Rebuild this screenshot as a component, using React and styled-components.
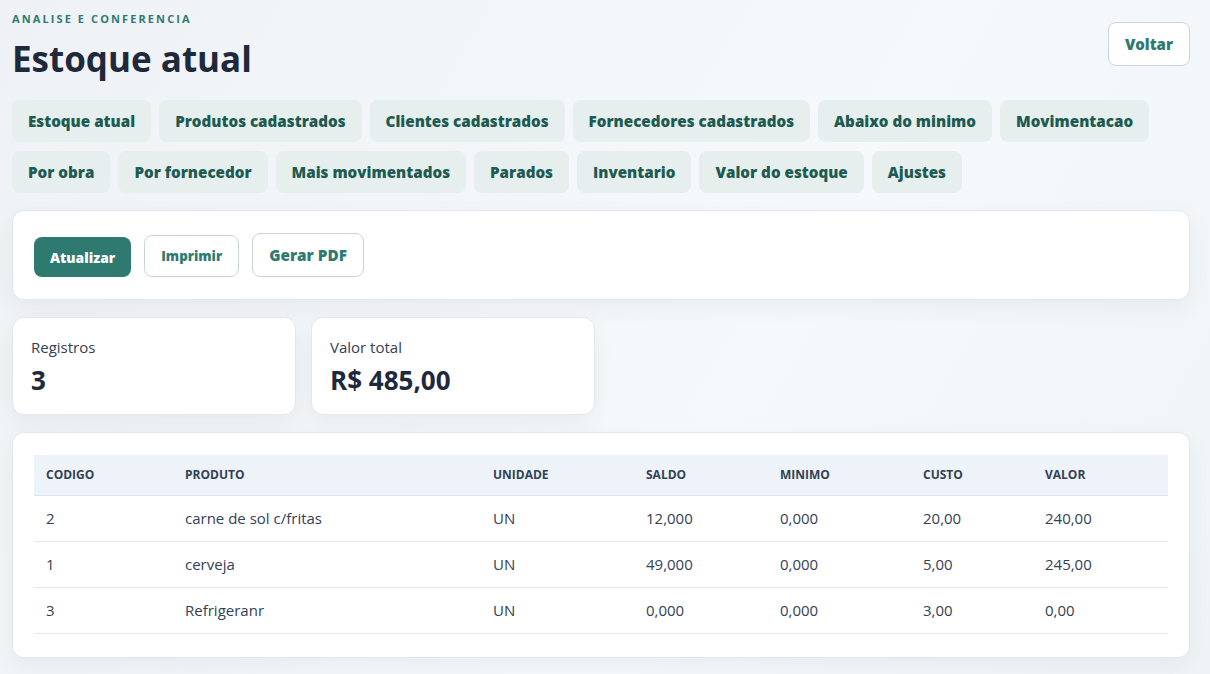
import styled, { createGlobalStyle } from "styled-components";

const GlobalStyle = createGlobalStyle`
  * { box-sizing: border-box; }
  body {
    margin: 0;
    font-family: "Open Sans", "Noto Sans", sans-serif;
    background: linear-gradient(120deg, #eef2f6 0%, #f6f9fb 60%, #eef4f6 100%);
    color: #1f2937;
    min-height: 100vh;
  }
`;

const tabs = [
  ["Estoque atual", "Produtos cadastrados", "Clientes cadastrados", "Fornecedores cadastrados", "Abaixo do minimo", "Movimentacao"],
  ["Por obra", "Por fornecedor", "Mais movimentados", "Parados", "Inventario", "Valor do estoque", "Ajustes"],
];

const columns = [
  { key: "codigo", label: "CODIGO", width: 139 },
  { key: "produto", label: "PRODUTO", width: 308 },
  { key: "unidade", label: "UNIDADE", width: 153 },
  { key: "saldo", label: "SALDO", width: 134 },
  { key: "minimo", label: "MINIMO", width: 143 },
  { key: "custo", label: "CUSTO", width: 122 },
  { key: "valor", label: "VALOR", width: 135 },
];

const rows = [
  { codigo: "2", produto: "carne de sol c/fritas", unidade: "UN", saldo: "12,000", minimo: "0,000", custo: "20,00", valor: "240,00" },
  { codigo: "1", produto: "cerveja", unidade: "UN", saldo: "49,000", minimo: "0,000", custo: "5,00", valor: "245,00" },
  { codigo: "3", produto: "Refrigeranr", unidade: "UN", saldo: "0,000", minimo: "0,000", custo: "3,00", valor: "0,00" },
];

export default function App() {
  return (
    <>
      <GlobalStyle />
      <Page>
        <Header>
          <div>
            <Eyebrow>ANALISE E CONFERENCIA</Eyebrow>
            <Title>Estoque atual</Title>
          </div>
          <OutlineButton $size={15} $h={44}>Voltar</OutlineButton>
        </Header>

        <Tabs>
          {tabs.map((line, i) => (
            <TabRow key={i}>
              {line.map((t) => (
                <Tab key={t}>{t}</Tab>
              ))}
            </TabRow>
          ))}
        </Tabs>

        <Card>
          <Toolbar>
            <PrimaryButton>Atualizar</PrimaryButton>
            <OutlineButton $size={13.3} $h={42}>Imprimir</OutlineButton>
            <OutlineButton $size={15.3} $h={44}>Gerar PDF</OutlineButton>
          </Toolbar>
        </Card>

        <Stats>
          <StatCard>
            <StatLabel>Registros</StatLabel>
            <StatValue>3</StatValue>
          </StatCard>
          <StatCard>
            <StatLabel>Valor total</StatLabel>
            <StatValue>R$ 485,00</StatValue>
          </StatCard>
        </Stats>

        <TableCard>
          <Table>
            <colgroup>
              {columns.map((c) => (
                <col key={c.key} style={{ width: c.width }} />
              ))}
            </colgroup>
            <thead>
              <tr>
                {columns.map((c) => (
                  <Th key={c.key}>{c.label}</Th>
                ))}
              </tr>
            </thead>
            <tbody>
              {rows.map((r) => (
                <tr key={r.codigo}>
                  {columns.map((c) => (
                    <Td key={c.key}>{r[c.key]}</Td>
                  ))}
                </tr>
              ))}
            </tbody>
          </Table>
        </TableCard>
      </Page>
    </>
  );
}

const Page = styled.div`
  width: 1178px;
  margin-left: 12px;
  padding-top: 12px;
  padding-bottom: 16px;
  display: flex;
  flex-direction: column;
`;

const Header = styled.header`
  display: flex;
  justify-content: space-between;
  align-items: flex-start;
  margin-bottom: 19px;

  > button {
    margin-top: 10px;
  }
`;

const Eyebrow = styled.div`
  font-size: 11px;
  font-weight: 700;
  letter-spacing: 2.1px;
  color: #2f7a70;
  line-height: 14px;
`;

const Title = styled.h1`
  margin: 11px 0 0;
  font-size: 35px;
  font-weight: 700;
  color: #1e293b;
  line-height: 44px;
`;

const Tabs = styled.nav`
  display: flex;
  flex-direction: column;
  gap: 9px;
  margin-bottom: 17px;
`;

const TabRow = styled.div`
  display: flex;
  gap: 8px;
`;

const Tab = styled.button`
  height: 42px;
  padding: 0 16px;
  border: none;
  border-radius: 8px;
  background: #e6efed;
  color: #1d5b52;
  font-family: "Open Sans", "Noto Sans", sans-serif;
  font-size: 15.2px;
  font-weight: 800;
  cursor: pointer;
`;

const Card = styled.section`
  background: #ffffff;
  border: 1px solid #e2e8f0;
  border-radius: 12px;
  box-shadow: 0 8px 24px rgba(15, 23, 42, 0.05);
  padding: 21px;
  margin-bottom: 17px;
`;

const TableCard = styled(Card)`
  padding: 22px 21px 23px;
`;

const Toolbar = styled.div`
  display: flex;
  align-items: flex-end;
  gap: 13px;
  padding: 1px 0;
`;

const PrimaryButton = styled.button`
  height: 40px;
  padding: 0 16px;
  border: none;
  border-radius: 8px;
  background: #2f7a70;
  color: #ffffff;
  font-family: "Open Sans", "Noto Sans", sans-serif;
  font-size: 13.8px;
  font-weight: 800;
`;

const OutlineButton = styled.button`
  height: ${(p) => p.$h}px;
  padding: 0 16px;
  border: 1px solid #c9d6d8;
  border-radius: 8px;
  background: #ffffff;
  color: #2f7a70;
  font-family: "Open Sans", "Noto Sans", sans-serif;
  font-size: ${(p) => p.$size}px;
  font-weight: 800;
`;

const Stats = styled.div`
  display: flex;
  gap: 15px;
`;

const StatCard = styled(Card)`
  width: 284px;
  height: 98px;
  padding: 19px 18px;
`;

const StatLabel = styled.div`
  font-size: 15px;
  color: #334155;
  line-height: 20px;
`;

const StatValue = styled.div`
  margin-top: 8px;
  font-size: 26px;
  font-weight: 700;
  color: #1e293b;
  line-height: 30px;
`;

const Table = styled.table`
  width: 100%;
  border-collapse: collapse;
  table-layout: fixed;
`;

const Th = styled.th`
  height: 40px;
  padding: 0 12px;
  text-align: left;
  background: #edf3f8;
  border-bottom: 1px solid #dde5ec;
  font-size: 12px;
  font-weight: 700;
  color: #334155;
`;

const Td = styled.td`
  height: 46px;
  padding: 0 12px;
  border-bottom: 1px solid #e2e8f0;
  font-size: 15px;
  color: #334155;
`;
